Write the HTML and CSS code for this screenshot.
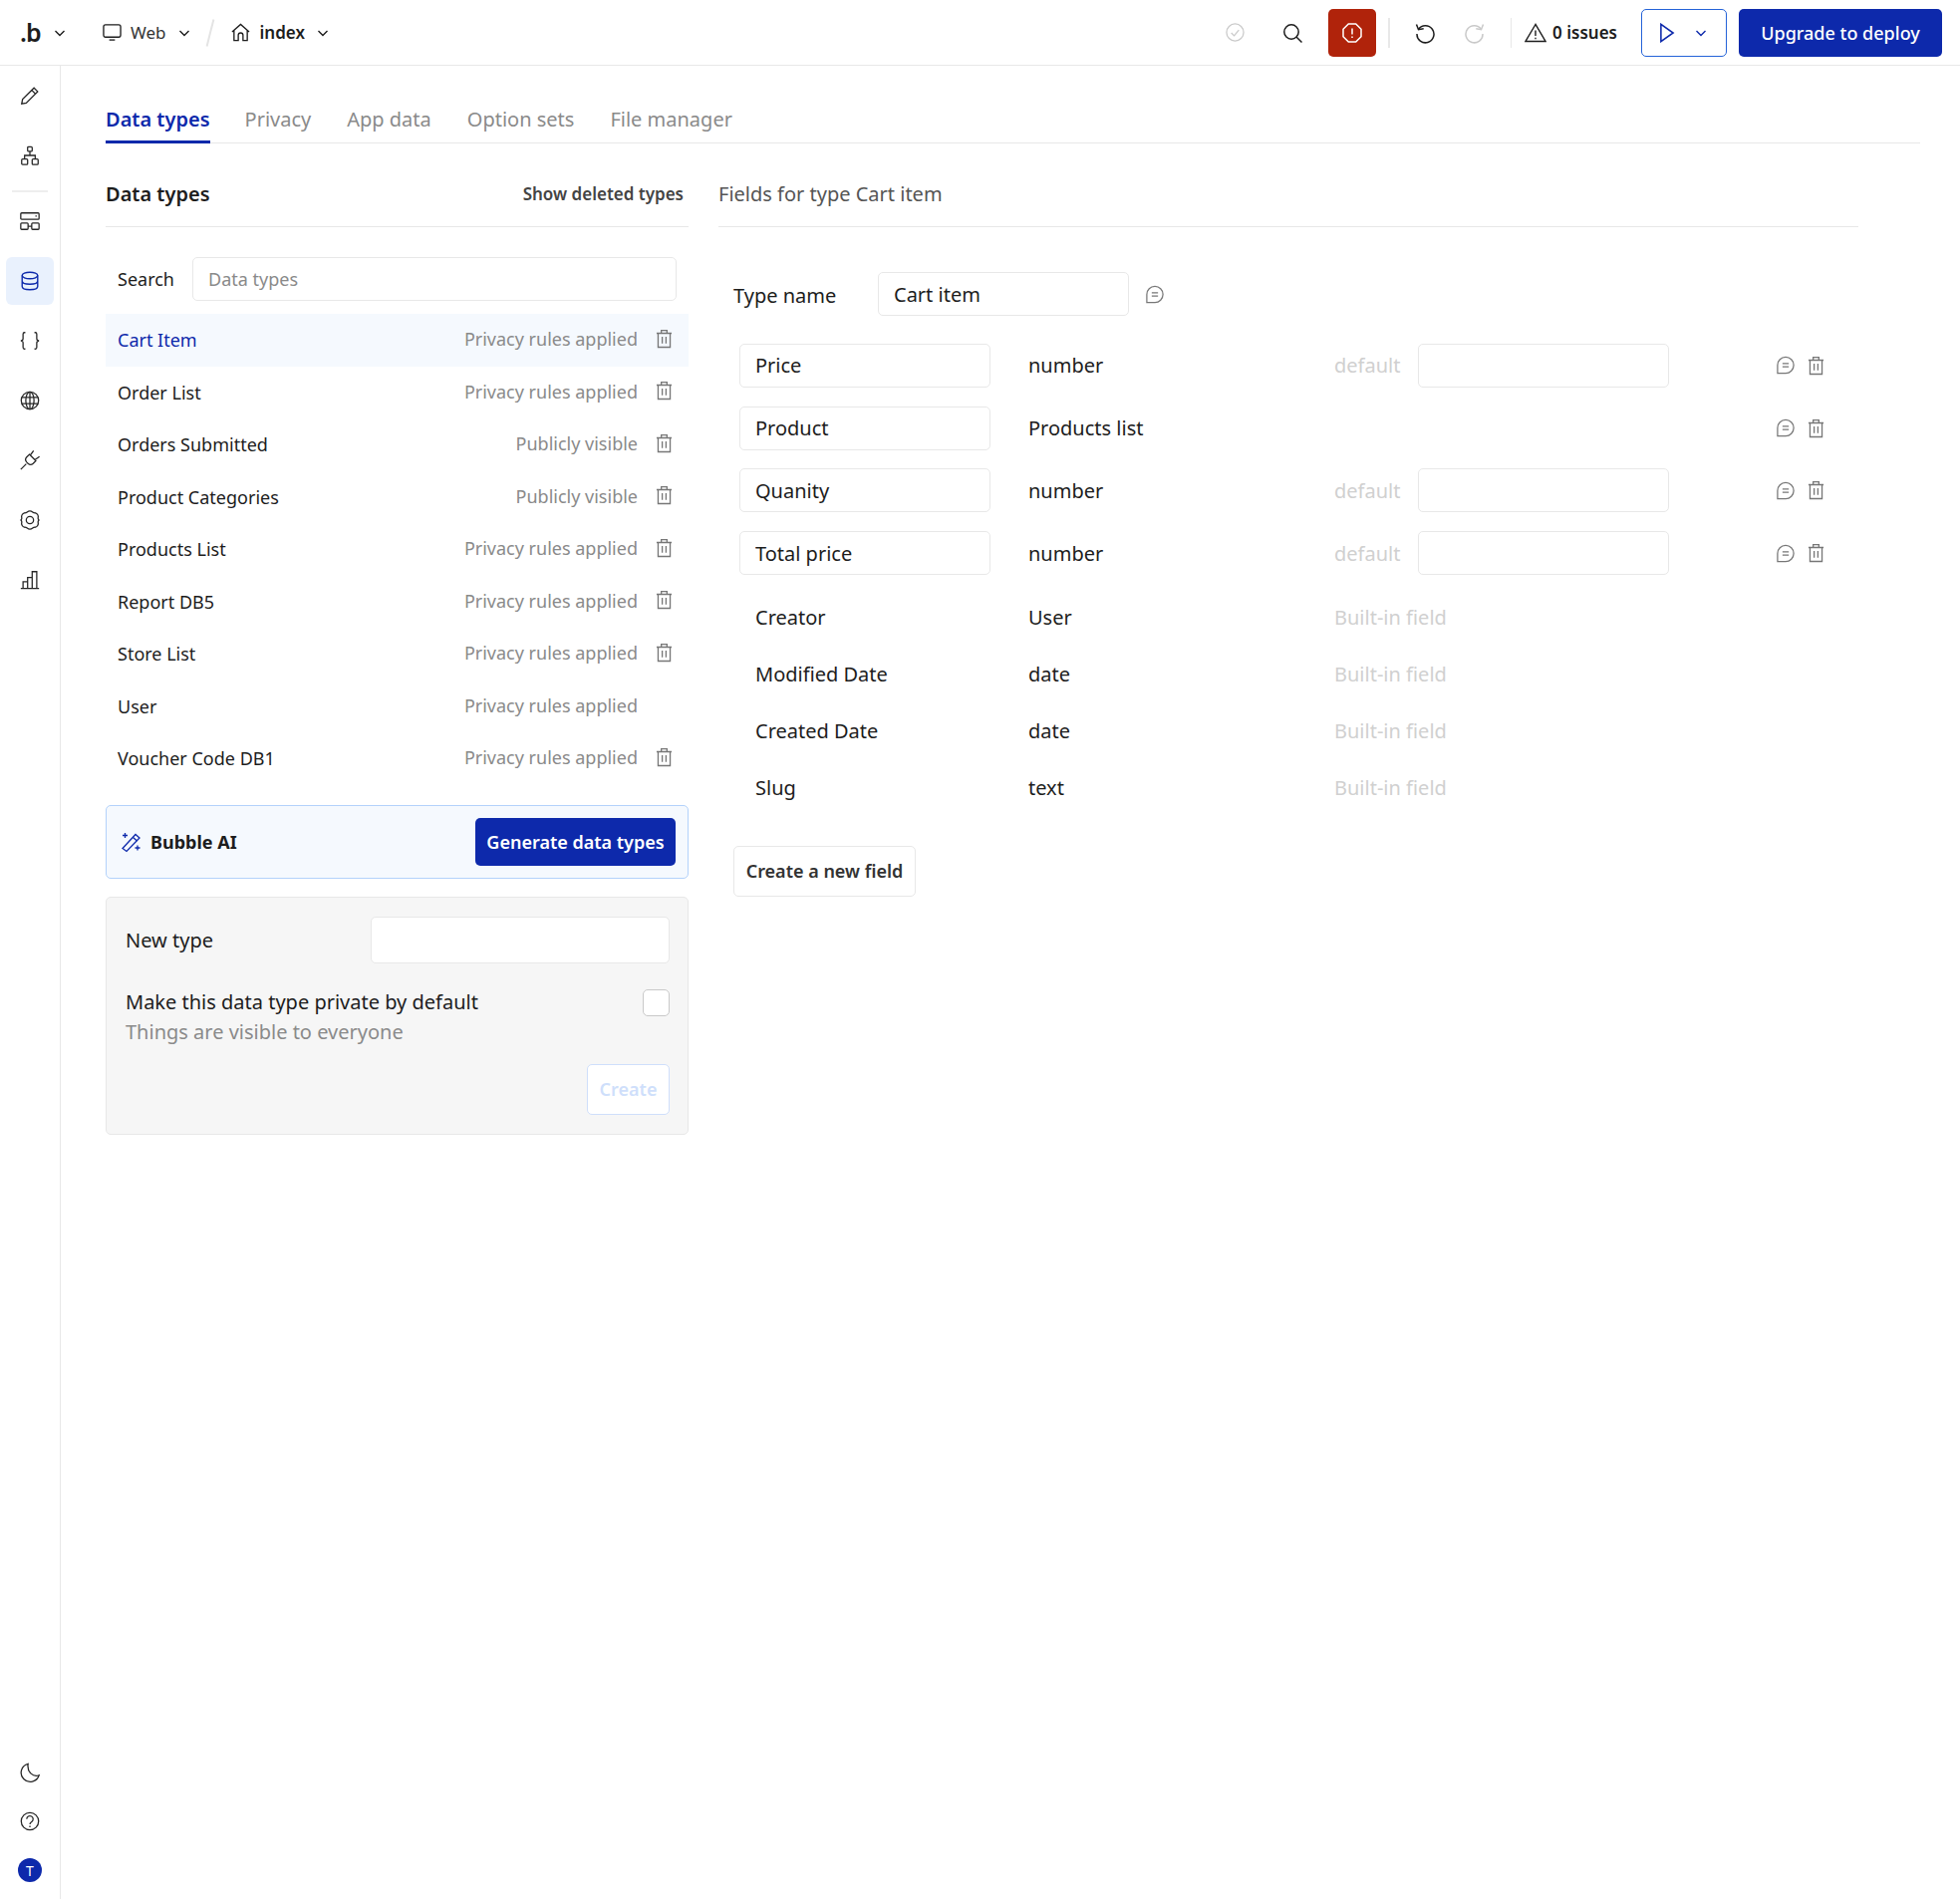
FILE: index.html
```html
<!DOCTYPE html>
<html lang="en">
<head>
  <meta charset="UTF-8" />
  <title>Data types</title>
  <link rel="stylesheet" href="styles.css">
</head>
<body>
  <svg class="defs" width="0" height="0">
    <symbol id="chevron" viewBox="0 0 12 12"><path d="M1.5 4l4.5 4.5L10.5 4" fill="none" stroke="currentColor" stroke-width="1.4"/></symbol>
    <symbol id="trash" viewBox="0 0 18 20"><g fill="none" stroke="currentColor" stroke-width="1.4"><path d="M1 4.2h16M6 4V1.2h6V4M2.6 4.2V19h12.8V4.2M7 8v7M11 8v7"/></g></symbol>
    <symbol id="comment" viewBox="0 0 20 20"><g fill="none" stroke="currentColor" stroke-width="1.4"><path d="M1 19h9a9 9 0 1 0-9-9z"/><path d="M6.5 8.2h7M6.5 11.8h7"/></g></symbol>
  </svg>

  <header class="topbar">
    <div class="top-left">
      <span class="logo">.b</span>
      <svg class="chev logo-chev"><use href="#chevron"/></svg>
      <svg class="top-icon monitor" viewBox="0 0 20 20" fill="none" stroke="currentColor" stroke-width="1.4"><rect x="1" y="2" width="18" height="13" rx="2"/><path d="M7 18h6"/></svg>
      <span class="web">Web</span>
      <svg class="chev"><use href="#chevron"/></svg>
      <span class="slash"></span>
      <svg class="top-icon" viewBox="0 0 20 20" fill="none" stroke="currentColor" stroke-width="1.4"><path d="M1 9.5L10 1.5l9 8M3 8v10.500h4.500V13a2.500 2.500 0 0 1 5 0v5.500H17V8"/></svg>
      <span class="page-name">index</span>
      <svg class="chev"><use href="#chevron"/></svg>
    </div>
    <div class="top-right">
      <svg class="top-icon muted" viewBox="0 0 20 20" fill="none" stroke="currentColor" stroke-width="1.3"><circle cx="10" cy="10" r="9"/><path d="M6 10.500l3 3 5-6"/></svg>
      <svg class="top-icon search" viewBox="0 0 20 20" fill="none" stroke="currentColor" stroke-width="1.5"><circle cx="9" cy="9" r="7.200"/><path d="M14 14l5.500 5.500"/></svg>
      <button class="alert-btn" type="button">
        <svg viewBox="0 0 20 20" fill="none" stroke="currentColor" stroke-width="1.5"><path d="M6.300 1h7.400L19 6.300v7.400L13.700 19H6.300L1 13.700V6.300z"/><path d="M10 5.500v6M10 13.500v1.500"/></svg>
      </button>
      <span class="top-sep"></span>
      <svg class="top-icon undo" viewBox="0 0 22 22" fill="none" stroke="currentColor" stroke-width="1.5"><path d="M4.500 7.500A8.500 8.500 0 1 1 3 12"/><path d="M2.500 2.500l2 5.200 5.200-.9"/></svg>
      <svg class="top-icon redo muted" viewBox="0 0 22 22" fill="none" stroke="currentColor" stroke-width="1.5"><path d="M17.500 7.500A8.500 8.500 0 1 0 19 12"/><path d="M19.500 2.500l-2 5.200-5.200-.9"/></svg>
      <span class="top-sep sep-b"></span>
      <svg class="top-icon warn" viewBox="0 0 22 20" fill="none" stroke="currentColor" stroke-width="1.4"><path d="M11 1.500L1 18.500h20z"/><path d="M11 7.500v5.500M11 14.700v1.500"/></svg>
      <span class="issues">0 issues</span>
      <button class="run-btn" type="button">
        <svg class="play" viewBox="0 0 14 18" fill="none" stroke="currentColor" stroke-width="1.4"><path d="M1.500 1.200v15.600L12.500 9z"/></svg>
        <svg class="chev"><use href="#chevron"/></svg>
      </button>
      <button class="upgrade-btn" type="button">Upgrade to deploy</button>
    </div>
  </header>

  <div class="shell">
    <nav class="sidebar">
      <div class="side-top">
        <span class="side-item"><svg viewBox="0 0 24 24" fill="none" stroke="currentColor" stroke-width="1.400"><path d="M3 21l1-5L16.500 3.500l4 4L8 20z"/><path d="M14 6l4 4"/></svg></span>
        <span class="side-item"><svg viewBox="0 0 24 24" fill="none" stroke="currentColor" stroke-width="1.400"><rect x="9.500" y="2.500" width="5" height="5" rx="1"/><rect x="3" y="16" width="6.500" height="6" rx="1"/><rect x="14.500" y="16" width="6.500" height="6" rx="1"/><path d="M12 7.500V12M6.200 16v-4h11.600v4"/></svg></span>
        <span class="side-rule"></span>
        <span class="side-item"><svg viewBox="0 0 24 24" fill="none" stroke="currentColor" stroke-width="1.400"><rect x="2" y="3" width="20" height="7" rx="1"/><rect x="2" y="14" width="8" height="7" rx="1"/><rect x="14" y="14" width="8" height="7" rx="1"/><path d="M10 17.500h4M18 6.500h1.500"/></svg></span>
        <span class="side-item active"><svg viewBox="0 0 24 24" fill="none" stroke="currentColor" stroke-width="1.500"><ellipse cx="12" cy="6" rx="8.500" ry="3.500"/><path d="M3.500 6v12c0 2 3.800 3.500 8.500 3.500s8.500-1.500 8.500-3.500V6M3.500 12c0 2 3.800 3.500 8.500 3.500s8.500-1.500 8.500-3.500"/></svg></span>
        <span class="side-item"><svg viewBox="0 0 24 24" fill="none" stroke="currentColor" stroke-width="1.400"><path d="M7 3H6C4.800 3 4.500 4 4.500 5v4.500C4.500 11 3.500 12 2 12c1.500 0 2.500 1 2.500 2.500V19c0 1 .3 2 1.500 2h1M17 3h1c1.200 0 1.500 1 1.500 2v4.500c0 1.500 1 2.500 2.500 2.500-1.500 0-2.500 1-2.500 2.500V19c0 1-.3 2-1.500 2h-1"/></svg></span>
        <span class="side-item"><svg viewBox="0 0 24 24" fill="none" stroke="currentColor" stroke-width="1.400"><circle cx="12" cy="12" r="9.500"/><ellipse cx="12" cy="12" rx="4.500" ry="9.500"/><path d="M3 8.500h18M3 15.500h18M12 2.500v19"/></svg></span>
        <span class="side-item"><svg viewBox="0 0 24 24" fill="none" stroke="currentColor" stroke-width="1.400"><path d="M11.500 5.500l7 7-3 3a4 4 0 0 1-5.500 0l-1.500-1.500a4 4 0 0 1 0-5.500zM8 16l-6 6M12.500 6.500L16 1.500M17.500 11.500L22.500 8"/></svg></span>
        <span class="side-item"><svg viewBox="0 0 24 24" fill="none" stroke="currentColor" stroke-width="1.400"><circle cx="12" cy="12" r="4"/><path d="M9 3.200c1.700-1.400 4.300-1.400 6 0 1 .8 1.800 1 3 .9 2 .5 3.500 3 3 5-.3 1 0 2 .8 2.900-.8 1-1.100 1.900-.8 2.900.5 2-1 4.500-3 5-1.200-.1-2 .1-3 .9-1.700 1.400-4.300 1.400-6 0-1-.8-1.800-1-3-.9-2-.5-3.500-3-3-5 .3-1 0-1.900-.8-2.900.8-.9 1.100-1.900.8-2.900-.5-2 1-4.500 3-5 1.200.1 2-.1 3-.9z"/></svg></span>
        <span class="side-item"><svg viewBox="0 0 24 24" fill="none" stroke="currentColor" stroke-width="1.400"><path d="M2 21.500h20M4.500 21.500V14h5v7.500M9.500 21.500V9.500h5v12M14.500 21.500V3h5v18.500"/></svg></span>
      </div>
      <div class="side-bottom">
        <span class="side-item"><svg viewBox="0 0 24 24" fill="none" stroke="currentColor" stroke-width="1.400"><path d="M10 2.500a10 10 0 1 0 12 12.500c-6 2.500-13.500-3-12-12.500z"/></svg></span>
        <span class="side-item"><svg viewBox="0 0 24 24" fill="none" stroke="currentColor" stroke-width="1.400"><circle cx="12" cy="12" r="9.500"/><path d="M8.500 9.500a3.500 3.500 0 1 1 5.500 3c-1.200.8-2 1.300-2 2.700M12 17v1.500"/></svg></span>
        <span class="avatar">T</span>
      </div>
    </nav>

    <main class="main">
      <div class="tabs">
        <a class="tab current">Data types</a>
        <a class="tab">Privacy</a>
        <a class="tab">App data</a>
        <a class="tab">Option sets</a>
        <a class="tab">File manager</a>
      </div>

      <div class="columns">
        <section class="types-panel">
          <div class="panel-head">
            <h2>Data types</h2>
            <span class="show-deleted">Show deleted types</span>
          </div>
          <div class="search-row">
            <label>Search</label>
            <input type="text" placeholder="Data types" />
          </div>
          <ul class="type-list">
            <li class="type-row selected"><span class="type-name">Cart Item</span><span class="type-status">Privacy rules applied</span><svg class="trash"><use href="#trash"/></svg></li>
            <li class="type-row"><span class="type-name">Order List</span><span class="type-status">Privacy rules applied</span><svg class="trash"><use href="#trash"/></svg></li>
            <li class="type-row"><span class="type-name">Orders Submitted</span><span class="type-status">Publicly visible</span><svg class="trash"><use href="#trash"/></svg></li>
            <li class="type-row"><span class="type-name">Product Categories</span><span class="type-status">Publicly visible</span><svg class="trash"><use href="#trash"/></svg></li>
            <li class="type-row"><span class="type-name">Products List</span><span class="type-status">Privacy rules applied</span><svg class="trash"><use href="#trash"/></svg></li>
            <li class="type-row"><span class="type-name">Report DB5</span><span class="type-status">Privacy rules applied</span><svg class="trash"><use href="#trash"/></svg></li>
            <li class="type-row"><span class="type-name">Store List</span><span class="type-status">Privacy rules applied</span><svg class="trash"><use href="#trash"/></svg></li>
            <li class="type-row no-trash"><span class="type-name">User</span><span class="type-status">Privacy rules applied</span></li>
            <li class="type-row"><span class="type-name">Voucher Code DB1</span><span class="type-status">Privacy rules applied</span><svg class="trash"><use href="#trash"/></svg></li>
          </ul>

          <div class="ai-box">
            <div class="ai-label">
              <svg viewBox="0 0 22 22" fill="none" stroke="currentColor" stroke-width="1.300"><path d="M2 17.500L15 3.500l4 3.500L6 20.500z"/><path d="M12.500 6.500l4 3.500M4.500 2v5M2 4.500h5M17 14.500v5M14.500 17h5"/></svg>
              <span>Bubble AI</span>
            </div>
            <button class="primary-btn" type="button">Generate data types</button>
          </div>

          <div class="new-type">
            <div class="new-row">
              <label>New type</label>
              <input type="text" />
            </div>
            <div class="private-row">
              <div>
                <div class="private-title">Make this data type private by default</div>
                <div class="private-note">Things are visible to everyone</div>
              </div>
              <input class="check" type="checkbox" />
            </div>
            <div class="create-wrap">
              <button class="create-btn" type="button">Create</button>
            </div>
          </div>
        </section>

        <section class="fields-panel">
          <div class="panel-head fields-head">
            <h2>Fields for type Cart item</h2>
          </div>
          <div class="type-name-row">
            <label>Type name</label>
            <input type="text" value="Cart item" />
            <svg class="comment"><use href="#comment"/></svg>
          </div>

          <div class="field-grid">
            <input type="text" value="Price" />
            <span>number</span>
            <span class="faint">default</span>
            <input type="text" />
            <span class="field-actions"><svg class="comment"><use href="#comment"/></svg><svg class="trash"><use href="#trash"/></svg></span>

            <input type="text" value="Product" />
            <span>Products list</span>
            <span></span>
            <span></span>
            <span class="field-actions"><svg class="comment"><use href="#comment"/></svg><svg class="trash"><use href="#trash"/></svg></span>

            <input type="text" value="Quanity" />
            <span>number</span>
            <span class="faint">default</span>
            <input type="text" />
            <span class="field-actions"><svg class="comment"><use href="#comment"/></svg><svg class="trash"><use href="#trash"/></svg></span>

            <input type="text" value="Total price" />
            <span>number</span>
            <span class="faint">default</span>
            <input type="text" />
            <span class="field-actions"><svg class="comment"><use href="#comment"/></svg><svg class="trash"><use href="#trash"/></svg></span>
          </div>

          <div class="builtin-grid">
            <span>Creator</span><span>User</span><span class="faint">Built-in field</span>
            <span>Modified Date</span><span>date</span><span class="faint">Built-in field</span>
            <span>Created Date</span><span>date</span><span class="faint">Built-in field</span>
            <span>Slug</span><span>text</span><span class="faint">Built-in field</span>
          </div>

          <button class="new-field-btn" type="button">Create a new field</button>
        </section>
      </div>
    </main>
  </div>
</body>
</html>
```

FILE: styles.css
```css
* {
  box-sizing: border-box;
}
html,
body {
  height: 100%;
}
body {
  margin: 0;
  display: flex;
  flex-direction: column;
  font-family: "Noto Sans", "Open Sans", sans-serif;
  font-size: 20px;
  color: #1d1d1d;
  background: #fff;
  overflow: hidden;
}
.defs {
  position: absolute;
}
input {
  font: inherit;
  color: inherit;
  height: 44px;
  padding: 0 15px;
  background: #fff;
  border: 1.5px solid #e8e8e8;
  border-radius: 5px;
  outline: none;
}
button {
  font: inherit;
  cursor: pointer;
}
ul {
  list-style: none;
  margin: 0;
  padding: 0;
}

/* top bar */
.topbar {
  height: 66px;
  flex: none;
  display: flex;
  justify-content: space-between;
  align-items: center;
  padding: 0 18px 0 20px;
  border-bottom: 1.5px solid #e8e8e8;
}
.top-left,
.top-right {
  display: flex;
  align-items: center;
}
.logo {
  width: 34px;
  font-size: 25px;
  font-weight: 600;
  line-height: 1;
  letter-spacing: -1px;
}
.chev {
  width: 12px;
  height: 12px;
  flex: none;
}
.logo-chev {
  margin-right: 37px;
}
.top-icon {
  width: 19px;
  height: 19px;
  flex: none;
}
.monitor {
  margin-right: 9px;
}
.web {
  font-size: 17px;
  color: #333;
  margin-right: 12px;
}
.slash {
  width: 2px;
  height: 28px;
  margin: 0 20px 0 19px;
  background: #e4e4e4;
  transform: rotate(14deg);
}
.page-name {
  font-size: 17px;
  font-weight: 600;
  margin: 0 12px 0 10px;
}
.muted {
  color: #c9c9c9;
}
.search {
  margin-left: 38px;
  margin-right: 26px;
  width: 20px;
  height: 20px;
}
.alert-btn {
  width: 48px;
  height: 48px;
  padding: 0;
  display: flex;
  align-items: center;
  justify-content: center;
  color: #fff;
  background: #b0230b;
  border: none;
  border-radius: 5px;
}
.alert-btn svg {
  width: 20px;
  height: 20px;
}
.top-sep {
  width: 1.5px;
  height: 30px;
  margin: 0 24px 0 12px;
  background: #e8e8e8;
}
.undo,
.redo {
  width: 22px;
  height: 22px;
}
.redo {
  margin-left: 28px;
}
.sep-b {
  margin: 0 13px 0 25px;
}
.warn {
  width: 22px;
  height: 20px;
  margin-right: 6px;
}
.issues {
  font-size: 17px;
  font-weight: 600;
  margin-right: 24px;
}
.run-btn {
  width: 86px;
  height: 48px;
  display: flex;
  align-items: center;
  padding: 0 0 0 17px;
  color: #0d29ab;
  background: #fff;
  border: 1.5px solid #2563d8;
  border-radius: 5px;
}
.play {
  width: 16px;
  height: 20px;
  margin-right: 20px;
}
.upgrade-btn {
  width: 204px;
  height: 48px;
  margin-left: 12px;
  padding: 0;
  font-size: 18px;
  font-weight: 500;
  color: #fff;
  background: #0d29ab;
  border: none;
  border-radius: 5px;
}

/* left rail */
.shell {
  flex: 1;
  display: flex;
  min-height: 0;
}
.sidebar {
  width: 61px;
  flex: none;
  display: flex;
  flex-direction: column;
  justify-content: space-between;
  padding: 6px 6px 17px;
  border-right: 1.5px solid #e8e8e8;
}
.side-top,
.side-bottom {
  display: flex;
  flex-direction: column;
  align-items: center;
}
.side-item {
  width: 48px;
  height: 48px;
  margin: 0 0 12px;
  display: flex;
  align-items: center;
  justify-content: center;
  border-radius: 6px;
  color: #262626;
}
.side-item svg {
  width: 22px;
  height: 22px;
}
.side-rule {
  width: 36px;
  height: 2px;
  margin: -1px 0 5px;
  background: #eee;
  flex: none;
}
.side-item.active {
  color: #0d29ab;
  background: #e9f1fd;
}
.side-bottom .side-item {
  margin-bottom: 1px;
}
.avatar {
  width: 24px;
  height: 24px;
  margin-top: 12px;
  display: flex;
  align-items: center;
  justify-content: center;
  font-size: 14px;
  color: #fff;
  background: #0d29ab;
  border-radius: 50%;
}

/* main area */
.main {
  flex: 1;
  min-width: 0;
  padding: 30px 40px 0 45px;
}
.tabs {
  height: 48px;
  display: flex;
  gap: 36px;
  border-bottom: 1.5px solid #e8e8e8;
}
.tab {
  height: 48px;
  line-height: 47px;
  color: #8a8a8a;
}
.tab.current {
  color: #0d29ab;
  font-weight: 600;
  border-bottom: 3px solid #0d29ab;
  margin-right: -1px;
}
.columns {
  display: flex;
  gap: 30px;
  margin-top: 32px;
}
.types-panel {
  width: 585px;
  flex: none;
}
.fields-panel {
  width: 1144px;
  flex: none;
}
.panel-head {
  height: 52px;
  display: flex;
  justify-content: space-between;
  align-items: center;
  padding: 0 5px 14px 0;
  border-bottom: 1.5px solid #e8e8e8;
}
.panel-head h2 {
  margin: 0;
  font-size: 20px;
  font-weight: 600;
}
.fields-head h2 {
  font-weight: 400;
  color: #555;
}
.show-deleted {
  font-size: 17px;
  font-weight: 600;
  color: #444;
}
.search-row {
  height: 44px;
  display: flex;
  align-items: center;
  margin: 30px 12px 13px;
  font-size: 18px;
}
.search-row label {
  width: 75px;
}
.search-row input {
  flex: 1;
  font-size: 18px;
}
.search-row input::placeholder {
  color: #8a8a8a;
}
.type-row {
  height: 52.5px;
  display: flex;
  align-items: center;
  padding: 0 16px 0 12px;
  font-size: 18px;
}
.type-row.selected {
  background: #f5f9fe;
}
.selected .type-name {
  color: #0d29ab;
}
.type-name {
  flex: 1;
}
.type-status {
  color: #8a8a8a;
  margin: 0 18px 2px 0;
}
.no-trash .type-status {
  margin-right: 35px;
}
.trash {
  width: 17px;
  height: 20px;
  flex: none;
  color: #777;
  margin-bottom: 3px;
}
.ai-box {
  height: 74px;
  display: flex;
  justify-content: space-between;
  align-items: center;
  margin-top: 20px;
  padding: 0 12px 0 14px;
  background: #f5f9fe;
  border: 1.5px solid #b3d2fb;
  border-radius: 5px;
}
.ai-label {
  display: flex;
  align-items: center;
  gap: 8px;
  font-size: 18px;
  font-weight: 700;
}
.ai-label svg {
  width: 22px;
  height: 22px;
  color: #0d29ab;
}
.primary-btn {
  width: 201px;
  height: 48px;
  padding: 0;
  font-size: 18px;
  font-weight: 600;
  color: #fff;
  background: #0d29ab;
  border: none;
  border-radius: 5px;
}
.new-type {
  height: 239px;
  margin-top: 18px;
  padding: 19px 18px 0 19px;
  background: #f6f6f6;
  border: 1.5px solid #e8e8e8;
  border-radius: 5px;
}
.new-row {
  display: flex;
  align-items: center;
  justify-content: space-between;
}
.new-row input {
  width: 300px;
  height: 47px;
}
.private-row {
  display: flex;
  justify-content: space-between;
  align-items: flex-start;
  margin-top: 24px;
}
.private-title {
  line-height: 30px;
}
.private-note {
  line-height: 30px;
  color: #8a8a8a;
}
.check {
  appearance: none;
  width: 27px;
  height: 27px;
  margin: 2px 0 0;
  padding: 0;
  border: 1.5px solid #c9c9c9;
}
.create-wrap {
  display: flex;
  justify-content: flex-end;
  margin-top: 17px;
}
.create-btn {
  width: 83px;
  height: 51px;
  padding: 0;
  font-size: 18px;
  font-weight: 600;
  color: #cfdffb;
  background: #fff;
  border: 1.5px solid #cfdffb;
  border-radius: 5px;
}

/* fields column */
.type-name-row {
  display: flex;
  align-items: center;
  margin: 45px 0 0 15px;
}
.type-name-row label {
  width: 145px;
  margin-top: 2px;
}
.type-name-row input {
  width: 252px;
}
.type-name-row .comment {
  margin-left: 17px;
}
.comment {
  width: 18px;
  height: 19px;
  flex: none;
  color: #777;
}
.field-grid {
  display: grid;
  grid-template-columns: 290px 307px 84px 252px 1fr;
  grid-auto-rows: 62.8px;
  align-items: center;
  margin: 18.500px 0 0 21px;
}
.field-grid input {
  width: 252px;
}
.faint {
  color: #d0d0d0;
}
.field-actions {
  display: flex;
  align-items: center;
  gap: 13px;
  padding-left: 108px;
}
.field-actions .trash {
  margin-bottom: 0;
}
.builtin-grid {
  display: grid;
  grid-template-columns: 274px 307px 1fr;
  grid-auto-rows: 57px;
  align-items: center;
  margin: 4px 0 0 37px;
}
.new-field-btn {
  width: 183px;
  height: 51px;
  margin: 30px 0 0 15px;
  padding: 0;
  font-size: 18px;
  font-weight: 600;
  color: #333;
  background: #fff;
  border: 1.5px solid #e8e8e8;
  border-radius: 5px;
}
```
